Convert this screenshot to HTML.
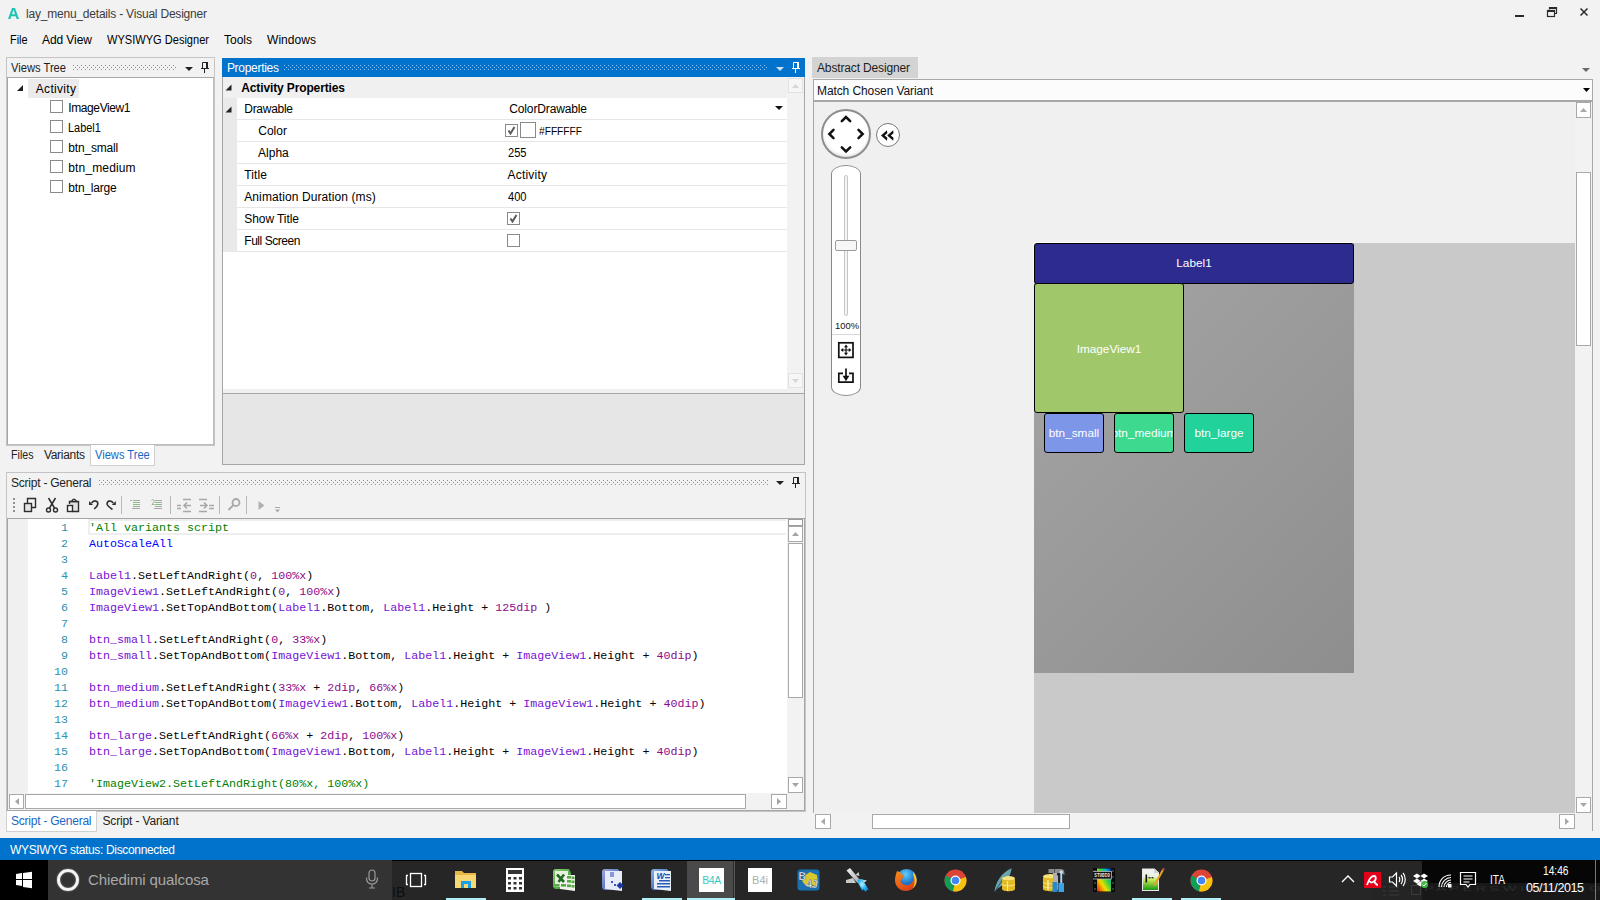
<!DOCTYPE html>
<html><head><meta charset="utf-8">
<style>
*{box-sizing:border-box;margin:0;padding:0}
html,body{width:1600px;height:900px;overflow:hidden;background:#f2f2f2;font-family:"Liberation Sans",sans-serif;font-size:12px;color:#000}
.a{position:absolute}
.t{position:absolute;white-space:nowrap;line-height:16px;font-size:11.5px}
.m{position:absolute;white-space:nowrap;line-height:16px;font-family:"Liberation Mono",monospace;font-size:11.68px}
.bx{position:absolute;border:1px solid #a0a0a0}
.grip{background-image:radial-gradient(circle at 1px 1px,#9a9a9a 0.8px,transparent 0.9px),radial-gradient(circle at 1px 1px,#9a9a9a 0.8px,transparent 0.9px);background-size:4px 4px,4px 4px;background-position:0 0,2px 2px}
.gripb{background-image:radial-gradient(circle at 1px 1px,#7fb3e6 0.8px,transparent 0.9px),radial-gradient(circle at 1px 1px,#7fb3e6 0.8px,transparent 0.9px);background-size:4px 4px,4px 4px;background-position:0 0,2px 2px}
.sb{position:absolute;background:#fff;border:1px solid #a8a8a8}
</style></head><body>

<!-- title bar -->
<div class="a" style="left:0;top:0;width:1600px;height:54px;background:#f2f2f2"></div>
<svg class="a" style="left:8px;top:8px" width="11" height="11"><path d="M0 11L4 0H7L11 11H8.6L7.7 8.3H3.3L2.4 11ZM4 6.3H7L5.5 1.8Z" fill="#1fc4b4"/></svg>
<div class="t" style="left:26.00px;top:6px;color:#3c3c3c;font-size:12px;letter-spacing:-0.208px">lay_menu_details - Visual Designer</div>
<!-- window controls -->
<svg class="a" style="left:1510px;top:4px" width="85" height="16"><g fill="none" stroke="#2a2a2a">
<path d="M5 12H14" stroke-width="2"/>
<path d="M39.5 5.5V3.5H46.5V9.5H44.5" stroke-width="1.2"/><path d="M39 4H47" stroke-width="2"/>
<rect x="37.5" y="6.5" width="7" height="6" stroke-width="1.2"/><path d="M37 7H45" stroke-width="2"/>
<path d="M70.5 4.5L77.5 11.5M77.5 4.5L70.5 11.5" stroke-width="1.5"/>
</g></svg>
<!-- menu -->
<div class="t" style="left:9.50px;top:32px;font-size:12px;transform:scaleX(0.9061);transform-origin:0 0">File</div>
<div class="t" style="left:42.00px;top:32px;font-size:12px;letter-spacing:-0.080px">Add View</div>
<div class="t" style="left:107.00px;top:32px;font-size:12px;transform:scaleX(0.9215);transform-origin:0 0">WYSIWYG Designer</div>
<div class="t" style="left:224.00px;top:32px;font-size:12px;letter-spacing:0.000px">Tools</div>
<div class="t" style="left:267.00px;top:32px;font-size:12px;letter-spacing:0.052px">Windows</div>

<!-- Views tree panel -->

<div class="a" style="left:6px;top:57px;width:209px;height:389px;border:1px solid #c4c4c4;background:#f2f2f2"></div>
<div class="t" style="left:11.00px;top:60px;color:#1e1e1e;font-size:12px;transform:scaleX(0.9302);transform-origin:0 0">Views Tree</div>
<svg class="a" style="left:73px;top:65px" width="104" height="6"><defs><pattern id="g7365" width="4" height="4" patternUnits="userSpaceOnUse"><rect x="0" y="0" width="1" height="1" fill="#8c8c8c"/><rect x="2" y="2" width="1" height="1" fill="#8c8c8c"/></pattern></defs><rect width="104" height="5" fill="url(#g7365)"/></svg>
<svg class="a" style="left:185px;top:67px" width="8" height="4"><path d="M0 0H8L4 4Z" fill="#222"/></svg>
<svg class="a" style="left:200px;top:61px" width="10" height="12"><path d="M2.5 1.5H7.5V7.5H2.5Z" fill="none" stroke="#222" stroke-width="1"/><path d="M6 1H8V8H6Z" fill="#222"/><path d="M1 7.5H9" stroke="#222" stroke-width="1"/><path d="M4.5 8V12" stroke="#222" stroke-width="1"/></svg>
<div class="a" style="left:7px;top:77px;width:207px;height:368px;background:#fff;border:1px solid #a6a6a6;border-right-color:#bdbdbd;border-bottom-color:#bdbdbd"></div>
<svg class="a" style="left:17px;top:85px" width="7" height="7"><path d="M6 0V6H0Z" fill="#222"/></svg>
<div class="a" style="left:28px;top:79px;width:51px;height:19px;background:#ebebeb"></div>
<div class="t" style="left:35.75px;top:81px;color:#000;font-size:12px;letter-spacing:0.321px">Activity</div>
<div class="a" style="left:50px;top:100px;width:13px;height:13px;border:1px solid #8a8a8a;background:#fff"></div>
<div class="t" style="left:68.30px;top:100px;color:#000;font-size:12px;letter-spacing:-0.401px">ImageView1</div>
<div class="a" style="left:50px;top:120px;width:13px;height:13px;border:1px solid #8a8a8a;background:#fff"></div>
<div class="t" style="left:68.30px;top:120px;color:#000;font-size:12px;transform:scaleX(0.9095);transform-origin:0 0">Label1</div>
<div class="a" style="left:50px;top:140px;width:13px;height:13px;border:1px solid #8a8a8a;background:#fff"></div>
<div class="t" style="left:68.30px;top:140px;color:#000;font-size:12px;letter-spacing:-0.172px">btn_small</div>
<div class="a" style="left:50px;top:160px;width:13px;height:13px;border:1px solid #8a8a8a;background:#fff"></div>
<div class="t" style="left:68.30px;top:160px;color:#000;font-size:12px;letter-spacing:0.137px">btn_medium</div>
<div class="a" style="left:50px;top:180px;width:13px;height:13px;border:1px solid #8a8a8a;background:#fff"></div>
<div class="t" style="left:68.30px;top:180px;color:#000;font-size:12px;letter-spacing:-0.208px">btn_large</div>

<div class="a" style="left:90px;top:445px;width:65px;height:21px;background:#fff;border:1px solid #d0d0d0;border-top:none"></div>
<div class="t" style="left:11.20px;top:447px;color:#222;font-size:12px;transform:scaleX(0.8889);transform-origin:0 0">Files</div>
<div class="t" style="left:43.90px;top:447px;color:#222;font-size:12px;letter-spacing:-0.289px">Variants</div>
<div class="t" style="left:95.20px;top:447px;color:#1a66c4;font-size:12px;transform:scaleX(0.9268);transform-origin:0 0">Views Tree</div>


<!-- Properties panel -->

<div class="a" style="left:222px;top:58px;width:583px;height:19px;background:#0173cc"></div>
<div class="t" style="left:226.90px;top:60px;color:#fff;font-size:12px;letter-spacing:-0.288px">Properties</div>
<svg class="a" style="left:284px;top:65px" width="484" height="6"><defs><pattern id="g28465" width="4" height="4" patternUnits="userSpaceOnUse"><rect x="0" y="0" width="1" height="1" fill="#8cc0ee"/><rect x="2" y="2" width="1" height="1" fill="#8cc0ee"/></pattern></defs><rect width="484" height="5" fill="url(#g28465)"/></svg>
<svg class="a" style="left:776px;top:67px" width="8" height="4"><path d="M0 0H8L4 4Z" fill="#cfe0f2"/></svg>
<svg class="a" style="left:791px;top:61px" width="10" height="12"><path d="M2.5 1.5H7.5V7.5H2.5Z" fill="none" stroke="#fff" stroke-width="1"/><path d="M6 1H8V8H6Z" fill="#fff"/><path d="M1 7.5H9" stroke="#fff" stroke-width="1"/><path d="M4.5 8V12" stroke="#fff" stroke-width="1"/></svg>
<div class="a" style="left:222px;top:77px;width:583px;height:313px;background:#fff;border-left:1px solid #a6a6a6;border-right:1px solid #a6a6a6;border-bottom:1px solid #a6a6a6"></div>
<div class="a" style="left:223px;top:77px;width:564px;height:21px;background:#f0f0f0"></div>
<div class="a" style="left:787px;top:77px;width:17px;height:312px;background:#f2f2f2"></div>
<div class="a" style="left:788px;top:78px;width:15px;height:15px;border:1px solid #e2e2e2;background:#f6f6f6"></div>
<svg class="a" style="left:792px;top:84px" width="7" height="4"><path d="M0 4H7L3.5 0Z" fill="#d6d6d6"/></svg>
<div class="a" style="left:788px;top:373px;width:15px;height:15px;border:1px solid #e2e2e2;background:#f6f6f6"></div>
<svg class="a" style="left:792px;top:379px" width="7" height="4"><path d="M0 0H7L3.5 4Z" fill="#d6d6d6"/></svg>
<div class="a" style="left:223px;top:98px;width:14px;height:154px;background:#e9e9e9"></div>
<svg class="a" style="left:225px;top:84px" width="7" height="7"><path d="M6.5 0.5V6.5H0.5Z" fill="#222"/></svg>
<div class="t" style="left:241.25px;top:80px;font-weight:bold;font-size:12px;letter-spacing:-0.128px">Activity Properties</div>
<svg class="a" style="left:225px;top:106px" width="7" height="7"><path d="M6.5 0.5V6.5H0.5Z" fill="#222"/></svg>
<div class="a" style="left:237px;top:119px;width:550px;height:1px;background:#e6e6e6"></div>
<div class="t" style="left:244.25px;top:101px;font-size:12px;letter-spacing:-0.277px">Drawable</div>
<div class="t" style="left:509.25px;top:101px;font-size:12px;letter-spacing:-0.135px">ColorDrawable</div>
<div class="a" style="left:237px;top:141px;width:550px;height:1px;background:#e6e6e6"></div>
<div class="t" style="left:258.25px;top:123px;font-size:12px;letter-spacing:0.016px">Color</div>
<div class="a" style="left:237px;top:163px;width:550px;height:1px;background:#e6e6e6"></div>
<div class="t" style="left:258.00px;top:145px;font-size:12px;letter-spacing:0.016px">Alpha</div>
<div class="t" style="left:507.50px;top:145px;font-size:12px;transform:scaleX(0.9250);transform-origin:0 0">255</div>
<div class="a" style="left:237px;top:185px;width:550px;height:1px;background:#e6e6e6"></div>
<div class="t" style="left:244.25px;top:167px;font-size:12px;letter-spacing:0.125px">Title</div>
<div class="t" style="left:507.50px;top:167px;font-size:12px;letter-spacing:0.214px">Activity</div>
<div class="a" style="left:237px;top:207px;width:550px;height:1px;background:#e6e6e6"></div>
<div class="t" style="left:244.25px;top:189px;font-size:12px;letter-spacing:0.097px">Animation Duration (ms)</div>
<div class="t" style="left:507.50px;top:189px;font-size:12px;transform:scaleX(0.9250);transform-origin:0 0">400</div>
<div class="a" style="left:237px;top:229px;width:550px;height:1px;background:#e6e6e6"></div>
<div class="t" style="left:244.25px;top:211px;font-size:12px;letter-spacing:-0.069px">Show Title</div>
<div class="a" style="left:237px;top:251px;width:550px;height:1px;background:#e6e6e6"></div>
<div class="t" style="left:244.25px;top:233px;font-size:12px;letter-spacing:-0.444px">Full Screen</div>

<svg class="a" style="left:775px;top:106px" width="8" height="4"><path d="M0 0H8L4 4Z" fill="#111"/></svg>
<div class="a" style="left:505px;top:124px;width:13px;height:13px;border:1px solid #8a8a8a;background:#fff"></div>
<svg class="a" style="left:507px;top:126px" width="9" height="9"><path d="M1.5 4.5L3.5 7.5L7.5 1" fill="none" stroke="#5a5a5a" stroke-width="2"/></svg>
<div class="a" style="left:520px;top:122px;width:16px;height:16px;border:1px solid #8a8a8a;background:#fff"></div>
<div class="t" style="left:539.00px;top:123px;font-size:11px;transform:scaleX(0.9260);transform-origin:0 0">#FFFFFF</div>
<div class="a" style="left:507px;top:212px;width:13px;height:13px;border:1px solid #8a8a8a;background:#fff"></div>
<svg class="a" style="left:509px;top:214px" width="9" height="9"><path d="M1.5 4.5L3.5 7.5L7.5 1" fill="none" stroke="#5a5a5a" stroke-width="2"/></svg>
<div class="a" style="left:507px;top:234px;width:13px;height:13px;border:1px solid #8a8a8a;background:#fff"></div>
<div class="a" style="left:222px;top:389px;width:583px;height:5px;background:#f0f0f0;border-left:1px solid #a6a6a6;border-right:1px solid #a6a6a6"></div>
<div class="a" style="left:222px;top:393px;width:583px;height:72px;background:#e6e6e6;border:1px solid #a6a6a6"></div>


<!-- Script panel -->

<div class="a" style="left:6px;top:472px;width:800px;height:340px;border:1px solid #c4c4c4;background:#f2f2f2"></div>
<div class="t" style="left:11.00px;top:475px;color:#1e1e1e;font-size:12px;letter-spacing:-0.233px">Script - General</div>
<svg class="a" style="left:99px;top:480px" width="669" height="6"><defs><pattern id="g99480" width="4" height="4" patternUnits="userSpaceOnUse"><rect x="0" y="0" width="1" height="1" fill="#8c8c8c"/><rect x="2" y="2" width="1" height="1" fill="#8c8c8c"/></pattern></defs><rect width="669" height="5" fill="url(#g99480)"/></svg>
<svg class="a" style="left:776px;top:481px" width="8" height="4"><path d="M0 0H8L4 4Z" fill="#222"/></svg>
<svg class="a" style="left:791px;top:476px" width="10" height="12"><path d="M2.5 1.5H7.5V7.5H2.5Z" fill="none" stroke="#222" stroke-width="1"/><path d="M6 1H8V8H6Z" fill="#222"/><path d="M1 7.5H9" stroke="#222" stroke-width="1"/><path d="M4.5 8V12" stroke="#222" stroke-width="1"/></svg>
<!-- toolbar -->
<svg class="a" style="left:10px;top:494px" width="280" height="24">
 <g fill="#8e8e8e"><rect x="3" y="4" width="2" height="2"/><rect x="3" y="8" width="2" height="2"/><rect x="3" y="12" width="2" height="2"/><rect x="3" y="16" width="2" height="2"/></g>
 <g fill="none" stroke="#2e2e2e" stroke-width="1.4">
  <path d="M17.5 9V4.5H25.5V13.5H21.5"/><rect x="14.5" y="9.5" width="7" height="8" fill="#e4e4e4"/>
  <path d="M38.5 4L44.5 14M45.5 4L39.5 14" stroke-width="1.5"/><circle cx="38.5" cy="16" r="2"/><circle cx="45.5" cy="16" r="2"/>
  <path d="M59.5 10V7.5H68.5V17.5H62.5" fill="#e2e2e2"/><path d="M61.5 7.5L62.5 6.2A1.6 1.6 0 0 1 65.5 6.2L66.5 7.5Z" fill="#fff"/><rect x="57.5" y="11.5" width="5" height="6" fill="#fafafa"/>
  <path d="M81.5 9.2C83.5 5.8 88.2 6.2 87.8 10.2C87.6 12 86 13.5 84.2 15" stroke-width="1.6"/>
  <path d="M103.2 9C101 5.8 96.2 6.6 97.3 10.8C98 12.5 100.5 14 102.5 15.5" stroke-width="1.6"/>
 </g>
 <path d="M79 7V11H83Z" fill="#2e2e2e"/><path d="M105.8 7V11H101.8Z" fill="#2e2e2e"/>
 <g stroke="#b8b8b8" stroke-width="1"><path d="M111.5 2V20M160.5 2V20M209.5 2V20M236.5 2V20"/></g>
 <g stroke-width="1.2">
  <path d="M120 6.5H122M123 6.5H130M123 12.5H130M122 14.5H130" stroke="#a8a8a8" stroke-width="1"/><path d="M123 8.5H130M123 10.5H130" stroke="#84c084" stroke-width="1"/>
  <path d="M145 6.5H152M145 12.5H152M144 14.5H152" stroke="#a8a8a8" stroke-width="1"/><path d="M145 8.5H152M145 10.5H152" stroke="#84c084" stroke-width="1"/><path d="M141.5 6.5C143 5 145 6 144 8L142 10.5H144.5" stroke="#a8a8a8" fill="none" stroke-width="1"/>
 </g>
 <g stroke="#a8a8a8" stroke-width="1.5" fill="none">
  <path d="M173 5.5H181M173 17.5H181M167 11.5H171M167 14.5H171M174 11.5H181M177 8.5L174 11.5L177 14.5"/>
  <path d="M189 5.5H197M189 17.5H197M199 11.5H204M199 14.5H204M190 11.5H197M194 8.5L197 11.5L194 14.5"/>
 </g>
 <g fill="none" stroke="#a8a8a8" stroke-width="1.8"><circle cx="226" cy="8.5" r="3.5"/><path d="M223.5 11L218.5 16"/></g>
 <path d="M248.5 7L254.5 11.5L248.5 16Z" fill="#b0b0b0"/>
 <path d="M265 13.5H270" stroke="#a8a8a8" stroke-width="1"/><path d="M265 15.5H270L267.5 18.5Z" fill="#a8a8a8"/>
</svg>
<!-- editor -->
<div class="a" style="left:7px;top:518px;width:798px;height:293px;background:#fff;border:1px solid #a6a6a6"></div>
<div class="a" style="left:8px;top:519px;width:20px;height:274px;background:#f0f0f0"></div>
<div class="a" style="left:88px;top:519px;width:698px;height:16px;border:2px solid #eeeeee;border-right:none"></div>
<div class="a" style="left:787px;top:519px;width:17px;height:274px;background:#f2f2f2"></div>
<div class="a" style="left:788px;top:519px;width:15px;height:7px;border:1px solid #9a9a9a;background:#fff"></div>
<div class="a sb" style="left:788px;top:526px;width:15px;height:16px"></div>
<svg class="a" style="left:792px;top:532px" width="7" height="4"><path d="M0 4H7L3.5 0Z" fill="#a4a4a4"/></svg>
<div class="a sb" style="left:788px;top:543px;width:15px;height:155px"></div>
<div class="a sb" style="left:788px;top:777px;width:15px;height:16px"></div>
<svg class="a" style="left:792px;top:783px" width="7" height="4"><path d="M0 0H7L3.5 4Z" fill="#a4a4a4"/></svg>
<div class="a" style="left:8px;top:793px;width:779px;height:17px;background:#f2f2f2"></div>
<div class="a sb" style="left:9px;top:794px;width:15px;height:15px"></div>
<svg class="a" style="left:15px;top:798px" width="4" height="7"><path d="M4 0V7L0 3.5Z" fill="#a4a4a4"/></svg>
<div class="a sb" style="left:25px;top:794px;width:721px;height:15px"></div>
<div class="a sb" style="left:771px;top:794px;width:16px;height:15px"></div>
<svg class="a" style="left:777px;top:798px" width="4" height="7"><path d="M0 0V7L4 3.5Z" fill="#a4a4a4"/></svg>
<div class="a" style="left:787px;top:793px;width:17px;height:17px;background:#f2f2f2"></div>
<div class="t" style="left:40px;width:28px;text-align:right;top:520px;color:#2b91af;font-family:'Liberation Mono',monospace;font-size:11.667px">1</div>
<div class="m" style="left:89px;top:520px"><span style="color:#008000">'All variants script</span></div>
<div class="t" style="left:40px;width:28px;text-align:right;top:536px;color:#2b91af;font-family:'Liberation Mono',monospace;font-size:11.667px">2</div>
<div class="m" style="left:89px;top:536px"><span style="color:#0000ff">AutoScaleAll</span></div>
<div class="t" style="left:40px;width:28px;text-align:right;top:552px;color:#2b91af;font-family:'Liberation Mono',monospace;font-size:11.667px">3</div>
<div class="t" style="left:40px;width:28px;text-align:right;top:568px;color:#2b91af;font-family:'Liberation Mono',monospace;font-size:11.667px">4</div>
<div class="m" style="left:89px;top:568px"><span style="color:#7412d2">Label1</span>.SetLeftAndRight(<span style="color:#8b0a8b">0</span>, <span style="color:#8b0a8b">100%x</span>)</div>
<div class="t" style="left:40px;width:28px;text-align:right;top:584px;color:#2b91af;font-family:'Liberation Mono',monospace;font-size:11.667px">5</div>
<div class="m" style="left:89px;top:584px"><span style="color:#7412d2">ImageView1</span>.SetLeftAndRight(<span style="color:#8b0a8b">0</span>, <span style="color:#8b0a8b">100%x</span>)</div>
<div class="t" style="left:40px;width:28px;text-align:right;top:600px;color:#2b91af;font-family:'Liberation Mono',monospace;font-size:11.667px">6</div>
<div class="m" style="left:89px;top:600px"><span style="color:#7412d2">ImageView1</span>.SetTopAndBottom(<span style="color:#7412d2">Label1</span>.Bottom, <span style="color:#7412d2">Label1</span>.Height + <span style="color:#8b0a8b">125dip</span> )</div>
<div class="t" style="left:40px;width:28px;text-align:right;top:616px;color:#2b91af;font-family:'Liberation Mono',monospace;font-size:11.667px">7</div>
<div class="t" style="left:40px;width:28px;text-align:right;top:632px;color:#2b91af;font-family:'Liberation Mono',monospace;font-size:11.667px">8</div>
<div class="m" style="left:89px;top:632px"><span style="color:#7412d2">btn_small</span>.SetLeftAndRight(<span style="color:#8b0a8b">0</span>, <span style="color:#8b0a8b">33%x</span>)</div>
<div class="t" style="left:40px;width:28px;text-align:right;top:648px;color:#2b91af;font-family:'Liberation Mono',monospace;font-size:11.667px">9</div>
<div class="m" style="left:89px;top:648px"><span style="color:#7412d2">btn_small</span>.SetTopAndBottom(<span style="color:#7412d2">ImageView1</span>.Bottom, <span style="color:#7412d2">Label1</span>.Height + <span style="color:#7412d2">ImageView1</span>.Height + <span style="color:#8b0a8b">40dip</span>)</div>
<div class="t" style="left:40px;width:28px;text-align:right;top:664px;color:#2b91af;font-family:'Liberation Mono',monospace;font-size:11.667px">10</div>
<div class="t" style="left:40px;width:28px;text-align:right;top:680px;color:#2b91af;font-family:'Liberation Mono',monospace;font-size:11.667px">11</div>
<div class="m" style="left:89px;top:680px"><span style="color:#7412d2">btn_medium</span>.SetLeftAndRight(<span style="color:#8b0a8b">33%x</span> + <span style="color:#8b0a8b">2dip</span>, <span style="color:#8b0a8b">66%x</span>)</div>
<div class="t" style="left:40px;width:28px;text-align:right;top:696px;color:#2b91af;font-family:'Liberation Mono',monospace;font-size:11.667px">12</div>
<div class="m" style="left:89px;top:696px"><span style="color:#7412d2">btn_medium</span>.SetTopAndBottom(<span style="color:#7412d2">ImageView1</span>.Bottom, <span style="color:#7412d2">Label1</span>.Height + <span style="color:#7412d2">ImageView1</span>.Height + <span style="color:#8b0a8b">40dip</span>)</div>
<div class="t" style="left:40px;width:28px;text-align:right;top:712px;color:#2b91af;font-family:'Liberation Mono',monospace;font-size:11.667px">13</div>
<div class="t" style="left:40px;width:28px;text-align:right;top:728px;color:#2b91af;font-family:'Liberation Mono',monospace;font-size:11.667px">14</div>
<div class="m" style="left:89px;top:728px"><span style="color:#7412d2">btn_large</span>.SetLeftAndRight(<span style="color:#8b0a8b">66%x</span> + <span style="color:#8b0a8b">2dip</span>, <span style="color:#8b0a8b">100%x</span>)</div>
<div class="t" style="left:40px;width:28px;text-align:right;top:744px;color:#2b91af;font-family:'Liberation Mono',monospace;font-size:11.667px">15</div>
<div class="m" style="left:89px;top:744px"><span style="color:#7412d2">btn_large</span>.SetTopAndBottom(<span style="color:#7412d2">ImageView1</span>.Bottom, <span style="color:#7412d2">Label1</span>.Height + <span style="color:#7412d2">ImageView1</span>.Height + <span style="color:#8b0a8b">40dip</span>)</div>
<div class="t" style="left:40px;width:28px;text-align:right;top:760px;color:#2b91af;font-family:'Liberation Mono',monospace;font-size:11.667px">16</div>
<div class="t" style="left:40px;width:28px;text-align:right;top:776px;color:#2b91af;font-family:'Liberation Mono',monospace;font-size:11.667px">17</div>
<div class="m" style="left:89px;top:776px"><span style="color:#008000">'ImageView2.SetLeftAndRight(80%x, 100%x)</span></div>

<div class="a" style="left:6px;top:811px;width:91px;height:21px;background:#fff;border:1px solid #d0d0d0;border-top:none"></div>
<div class="t" style="left:11.00px;top:813px;color:#1a66c4;font-size:12px;letter-spacing:-0.233px">Script - General</div>
<div class="t" style="left:102.50px;top:813px;color:#222;font-size:12px;letter-spacing:-0.150px">Script - Variant</div>


<!-- Abstract designer -->

<div class="a" style="left:812px;top:57px;width:106px;height:21px;background:#d3d3d3"></div>
<div class="t" style="left:817.00px;top:60px;color:#1e1e1e;font-size:12px;letter-spacing:-0.148px">Abstract Designer</div>
<svg class="a" style="left:1582px;top:68px" width="8" height="4"><path d="M0 0H8L4 4Z" fill="#6a6a6a"/></svg>
<div class="a" style="left:813px;top:79px;width:780px;height:752px;border:1px solid #a8a8a8;background:#f0f0f0"></div>
<div class="a" style="left:814px;top:80px;width:778px;height:22px;background:#fcfcfc;border-bottom:2px solid #a8a8a8"></div>
<div class="t" style="left:817.00px;top:83px;color:#10101a;font-size:12px;letter-spacing:-0.095px">Match Chosen Variant</div>
<svg class="a" style="left:1583px;top:88px" width="7" height="4"><path d="M0 0H7L3.5 4Z" fill="#000"/></svg>
<!-- nav circle -->
<div class="a" style="left:821px;top:109px;width:50px;height:50px;border-radius:50%;background:radial-gradient(circle at 50% 45%,#fff 0,#fff 66%,#e2e2e2 100%);border:2px solid #8e8e8e;box-shadow:inset 0 -2px 3px rgba(0,0,0,0.08)"></div>
<svg class="a" style="left:821px;top:109px" width="50" height="50"><g fill="none" stroke="#111" stroke-width="2.5" stroke-linecap="round" stroke-linejoin="miter"><path d="M20.8 12.2L25 8L29.2 12.2"/><path d="M20.8 38.3L25 42.5L29.2 38.3"/><path d="M12.5 20.8L8.3 25L12.5 29.2"/><path d="M37.5 20.8L41.7 25L37.5 29.2"/></g></svg>
<div class="a" style="left:876px;top:123px;width:24px;height:24px;border-radius:50%;background:#fff;border:1.3px solid #7a7a7a"></div>
<svg class="a" style="left:876px;top:123px" width="24" height="24"><g fill="#111"><path d="M5 12.5L11 7.2L11.3 10.2L8.6 12.5L11.3 14.8L11 17.8Z"/><path d="M11.2 12.5L17.2 7.2L17.5 10.2L14.8 12.5L17.5 14.8L17.2 17.8Z"/></g></svg>
<!-- slider -->
<div class="a" style="left:831px;top:165px;width:30px;height:231px;border:1px solid #8a8a8a;border-radius:15px 15px 15px 15px/9px 9px 9px 9px;background:#fff"></div>
<div class="a" style="left:844px;top:175px;width:4px;height:141px;border:1px solid #c6c6c6;border-radius:2px;background:#f4f4f4"></div>
<div class="a" style="left:835px;top:240px;width:22px;height:11px;border:1px solid #9a9a9a;border-radius:2px;background:#f7f7f7"></div>
<div class="t" style="left:835px;top:318px;font-size:9.4px;color:#111">100%</div>
<div class="a" style="left:832px;top:334px;width:28px;height:1px;background:#d8d8d8"></div>
<svg class="a" style="left:836px;top:340px" width="20" height="46"><g fill="none" stroke="#111"><rect x="2.8" y="2.8" width="14.2" height="14.6" stroke-width="1.7"/><path d="M10 6V14M6 10H14" stroke-width="1.2"/><path d="M7 33.3H2.8V42.2H17V33.3H13M10 28.5V38" stroke-width="1.7"/></g><g fill="#111"><path d="M10 4.6L8 7.2H12ZM10 15.4L8 12.8H12ZM4.6 10L7.2 8V12ZM15.4 10L12.8 8V12Z"/><path d="M6.6 35.8H13.4L10 41.2Z"/></g></svg>
<!-- canvas -->
<div class="a" style="left:1034px;top:243px;width:541px;height:570px;background:#c9c9c9"></div>
<div class="a" style="left:1034px;top:243px;width:320px;height:430px;background:linear-gradient(135deg,#a6a6a6,#8e8e8e)"></div>
<div class="a" style="left:1034px;top:243px;width:320px;height:41px;background:#2e2b8f;border:1px solid #000;border-radius:3px;box-shadow:-1px -1px 0 0 rgba(255,255,255,0.8)"></div>
<div class="t" style="left:1034px;top:255px;width:320px;text-align:center;color:#fff;font-size:11.8px">Label1</div>
<div class="a" style="left:1034px;top:283px;width:150px;height:130px;background:#a0c86b;border:1px solid #000;border-radius:3px"></div>
<div class="t" style="left:1034px;top:341px;width:150px;text-align:center;color:#fff;font-size:11.8px">ImageView1</div>
<div class="a" style="left:1044px;top:413px;width:60px;height:40px;background:#7e96e8;border:1px solid #000;border-radius:3px"></div>
<div class="t" style="left:1044px;top:425px;width:60px;text-align:center;color:#fff;font-size:11.8px">btn_small</div>
<div class="a" style="left:1114px;top:413px;width:60px;height:40px;background:#3cd98f;border:1px solid #000;border-radius:3px;overflow:hidden"><div class="t" style="left:-6px;top:11px;width:70px;text-align:center;color:#fff;font-size:11.8px">btn_medium</div></div>
<div class="a" style="left:1184px;top:413px;width:70px;height:40px;background:#22d29b;border:1px solid #000;border-radius:3px"></div>
<div class="t" style="left:1184px;top:425px;width:70px;text-align:center;color:#fff;font-size:11.8px">btn_large</div>
<!-- scrollbars -->
<div class="a" style="left:1575px;top:102px;width:17px;height:711px;background:#f2f2f2"></div>
<div class="sb" style="left:1576px;top:102px;width:15px;height:16px"></div>
<svg class="a" style="left:1580px;top:108px" width="7" height="4"><path d="M0 4H7L3.5 0Z" fill="#a8a8a8"/></svg>
<div class="sb" style="left:1576px;top:172px;width:15px;height:174px"></div>
<div class="sb" style="left:1576px;top:797px;width:15px;height:16px"></div>
<svg class="a" style="left:1580px;top:803px" width="7" height="4"><path d="M0 0H7L3.5 4Z" fill="#a8a8a8"/></svg>
<div class="a" style="left:813px;top:813px;width:779px;height:18px;background:#f2f2f2"></div>
<div class="sb" style="left:815px;top:814px;width:16px;height:15px"></div>
<svg class="a" style="left:821px;top:818px" width="4" height="7"><path d="M4 0V7L0 3.5Z" fill="#a8a8a8"/></svg>
<div class="sb" style="left:872px;top:814px;width:198px;height:15px"></div>
<div class="sb" style="left:1559px;top:814px;width:16px;height:15px"></div>
<svg class="a" style="left:1565px;top:818px" width="4" height="7"><path d="M0 0V7L4 3.5Z" fill="#a8a8a8"/></svg>


<!-- status bar -->
<div class="a" style="left:0;top:838px;width:1600px;height:22px;background:#0173cc"></div>
<div class="t" style="left:10.00px;top:842px;color:#fff;font-size:12px;letter-spacing:-0.336px">WYSIWYG status: Disconnected</div>

<!-- taskbar -->
<div class="a" style="left:0;top:860px;width:1600px;height:40px;background:#262626;border-top:1px solid #000"></div>
<div class="a" style="left:1422px;top:860px;width:178px;height:40px;background:#060606"></div>
<div class="a" style="left:1372px;top:883px;width:228px;height:17px;background:#181818"></div>
<div class="a" style="left:1372px;top:883px;width:50px;height:17px;background:#242424"></div>
<svg class="a" style="left:1378px;top:884px" width="44" height="16"><g fill="none" stroke="#3a3a3a" stroke-width="1"><path d="M5 3H8M5 7H8M5 11H8M11 3H21M11 7H21M11 11H21"/><rect x="33.5" y="1.5" width="9" height="9"/></g></svg>
<div class="t" style="left:1424px;top:881px;font-size:7px;letter-spacing:1.6px;color:#2c2c2c;transform:scaleX(2.1);transform-origin:0 0">PAPERSWIDTH.COM</div>
<div class="a" style="left:0;top:860px;width:48px;height:40px;background:#000"></div>
<svg class="a" style="left:16px;top:871px" width="17" height="18"><path d="M0 2.9L6 2.1V8H0ZM7 1.9L16 0.8V8H7ZM0 9H6V14.9L0 14.1ZM7 9H16V17.2L7 16Z" fill="#fff"/></svg>
<div class="a" style="left:48px;top:860px;width:344px;height:40px;background:#333333"></div>
<div class="a" style="left:57px;top:869px;width:22px;height:22px;border-radius:50%;border:3.4px solid #f4f4f4;box-shadow:0 0 1.5px #bbb, inset 0 0 1.5px #bbb"></div>
<div class="t" style="left:88.00px;top:872px;line-height:16px;color:#a9a9a9;font-size:15px;letter-spacing:-0.102px">Chiedimi qualcosa</div>
<svg class="a" style="left:364px;top:869px" width="16" height="21"><g fill="none" stroke="#9a9a9a" stroke-width="1.2"><rect x="5" y="1" width="6" height="11" rx="3"/><path d="M2.5 8.5C2.5 13 5 15 8 15C11 15 13.5 13 13.5 8.5M8 15V19M5 19H11"/></g></svg>
<div class="t" style="left:392px;top:884px;font-size:14px;color:#0e0e0e">IB</div>
<!-- task view -->
<svg class="a" style="left:405px;top:872px" width="22" height="16"><g fill="none" stroke="#fff" stroke-width="1.3"><rect x="5.5" y="1.5" width="11" height="13"/><path d="M3 3.5H1.5V12.5H3M19 3.5H20.5V12.5H19"/></g></svg>
<!-- explorer -->
<svg class="a" style="left:454px;top:869px" width="24" height="22"><path d="M1 2H8L10 4H22V19H1Z" fill="#e8b847"/><path d="M1 6H22V19H1Z" fill="#f7d774"/><path d="M7 12H17V19H14V15H10V19H7Z" fill="#1aa0e8"/></svg>
<div class="a" style="left:446px;top:898px;width:40px;height:2px;background:#aef0f5"></div>
<!-- calc -->
<svg class="a" style="left:505px;top:868px" width="20" height="25"><rect x="1" y="0" width="18" height="24" fill="#fff"/><rect x="3" y="2" width="14" height="4" fill="#333"/><g fill="#333"><rect x="3" y="9" width="3" height="2.5"/><rect x="8.5" y="9" width="3" height="2.5"/><rect x="14" y="9" width="3" height="2.5"/><rect x="3" y="14" width="3" height="2.5"/><rect x="8.5" y="14" width="3" height="2.5"/><rect x="14" y="14" width="3" height="2.5"/><rect x="3" y="19" width="3" height="2.5"/><rect x="8.5" y="19" width="3" height="2.5"/><rect x="14" y="19" width="3" height="2.5"/></g></svg>
<!-- excel -->
<svg class="a" style="left:551px;top:868px" width="26" height="24"><defs><linearGradient id="xl" x1="0" y1="0" x2="1" y2="1"><stop offset="0" stop-color="#8ad070"/><stop offset="1" stop-color="#2a8a2a"/></linearGradient></defs><path d="M2 4C2 2 3 1 5 1H18L20 5V20L18 21H4L2 19Z" fill="url(#xl)"/><path d="M4 3H17V19H4Z" fill="#e8f0e0"/><path d="M9 7H24V23L9 21Z" fill="#f0f4ea"/><g fill="#58a848"><rect x="16" y="8" width="4" height="2.6"/><rect x="20.5" y="8.5" width="3" height="2.6"/><rect x="16" y="12" width="4" height="2.6"/><rect x="20.5" y="12.5" width="3" height="2.6"/><rect x="4" y="16" width="4.5" height="2.6"/><rect x="10" y="16" width="5" height="2.6"/><rect x="16" y="16.5" width="4" height="2.6"/><rect x="20.5" y="17" width="3" height="2.6"/></g><path d="M6 6.5L13 14M13 6.5L7.5 14" stroke="#1e6e1e" stroke-width="2.6"/></svg>
<!-- visio -->
<svg class="a" style="left:600px;top:868px" width="25" height="24"><defs><linearGradient id="vs" x1="0" y1="0" x2="1" y2="1"><stop offset="0" stop-color="#9aaae0"/><stop offset="1" stop-color="#3048a8"/></linearGradient></defs><path d="M2 4C2 2 3 1 5 1H18L21 5V21L18 22H4L2 20Z" fill="url(#vs)"/><path d="M5 3H22V23L5 21Z" fill="#e8ecf8"/><g fill="#3a58c0"><rect x="10" y="4" width="4" height="5" fill="#8898d8"/><rect x="11" y="13" width="2" height="2"/><rect x="14" y="16" width="2" height="2"/><path d="M20 14L23.5 17.5L20 21L16.5 17.5Z" fill="#1a3aa8"/></g></svg>
<!-- word -->
<svg class="a" style="left:649px;top:868px" width="25" height="24"><defs><linearGradient id="wd" x1="0" y1="0" x2="1" y2="1"><stop offset="0" stop-color="#8cb0e8"/><stop offset="1" stop-color="#1c4aa8"/></linearGradient></defs><path d="M2 4C2 2 3 1 5 1H18L21 5V21L18 22H4L2 20Z" fill="url(#wd)"/><path d="M5 3H22V23L5 21Z" fill="#eaf0f8"/><g fill="#2a5ab8"><rect x="10" y="12" width="11" height="1.5"/><rect x="8" y="15" width="13" height="1.5"/><rect x="8" y="18" width="13" height="1.5"/></g><text x="7.5" y="11" font-family="Liberation Sans" font-weight="bold" font-style="italic" font-size="8.5" fill="#1a4ab0">W</text><rect x="16" y="6" width="5" height="1.3" fill="#2a5ab8"/><rect x="16" y="9" width="5" height="1.3" fill="#2a5ab8"/></svg>
<div class="a" style="left:642px;top:898px;width:40px;height:2px;background:#aef0f5"></div>
<!-- b4a active -->
<div class="a" style="left:687px;top:861px;width:46px;height:39px;background:#4a4a4a"></div>
<div class="a" style="left:733px;top:861px;width:1px;height:39px;background:#2e2e2e"></div><div class="a" style="left:734px;top:861px;width:1px;height:39px;background:#555"></div>
<div class="a" style="left:699px;top:868px;width:25px;height:24px;background:#fff"></div>
<div class="t" style="left:699px;top:872px;width:25px;text-align:center;font-size:10.5px;color:#3cc9c0;letter-spacing:-0.5px">B4A</div>
<div class="a" style="left:687px;top:898px;width:48px;height:2px;background:#aef0f5"></div>
<!-- b4i -->
<div class="a" style="left:748px;top:868px;width:24px;height:24px;background:#fff"></div>
<div class="t" style="left:748px;top:872px;width:24px;text-align:center;font-size:11px;color:#a8b0b0">B4i</div>
<!-- b4j -->
<svg class="a" style="left:797px;top:869px" width="24" height="22"><rect x="0.5" y="0.5" width="22" height="21" rx="3" fill="#1a70b0"/><path d="M7 7L13 3L20 6L21 14L16 19L9 17L5 12Z" fill="#d8c830"/><text x="1.5" y="10.5" font-family="Liberation Sans" font-weight="bold" font-size="10.5" fill="#fff" stroke="#1a4a80" stroke-width="0.4">B</text><text x="9.5" y="18.5" font-family="Liberation Sans" font-weight="bold" font-size="10" fill="#fff" stroke="#1a4a80" stroke-width="0.4">4J</text></svg>
<!-- plane -->
<svg class="a" style="left:845px;top:867px" width="26" height="26"><defs><linearGradient id="pl" x1="0" y1="0" x2="1" y2="1"><stop offset="0" stop-color="#f4f4f4"/><stop offset="1" stop-color="#a8a8a8"/></linearGradient><radialGradient id="fl" cx="0.4" cy="0.4" r="0.7"><stop offset="0" stop-color="#b8f0ff"/><stop offset="0.5" stop-color="#2cb8f0"/><stop offset="1" stop-color="#0a7ad8"/></radialGradient></defs>
<path d="M1 13L8 11L11 16L1 16Z" fill="#c8c8c8"/><path d="M14 12L22 13.5L20 15L13 15Z" fill="#d8d8d8"/><path d="M10.5 8L13.5 5L14.5 9Z" fill="#d0d0d0"/>
<path d="M1.5 3.5L5 1L15 13L12.5 16Z" fill="url(#pl)"/>
<path d="M12.5 15C12 12 16 11 18 13L24 23.5L22 22.5L21 25L18 22L17.5 24Z" fill="url(#fl)"/></svg>
<!-- firefox -->
<svg class="a" style="left:894px;top:868px" width="24" height="24"><defs><radialGradient id="ffb" cx="0.45" cy="0.25" r="0.8"><stop offset="0" stop-color="#5fd0f8"/><stop offset="0.6" stop-color="#1a6cc8"/><stop offset="1" stop-color="#0c2a78"/></radialGradient><linearGradient id="ffo" x1="0" y1="0" x2="0.6" y2="1"><stop offset="0" stop-color="#f0901a"/><stop offset="0.6" stop-color="#e8601a"/><stop offset="1" stop-color="#d8401a"/></linearGradient></defs>
<circle cx="12.5" cy="11.5" r="10.5" fill="url(#ffb)"/>
<path d="M3 3C2 6 1 9 1 12C1 18.5 6 23 12 23C17.5 23 22 19 22.5 13C22.5 9 21 6 19 4C21 8 20 13 17 15.5C14 18 10 17.5 7.5 15C6 13.5 6.5 11 8.5 10.5L10 9L9.5 7L8 6.5L6.5 4.5Z" fill="url(#ffo)"/>
<path d="M19 4C21.5 6.5 23 10 22.5 14C22 17 20.5 19 18.5 20.5C21 17 21.5 12 19.5 8Z" fill="#f8d020"/></svg>
<!-- chrome -->
<svg class="a" style="left:944px;top:869px" width="23" height="23"><circle cx="11.5" cy="11.5" r="11" fill="#db4437"/><path d="M11.5 11.5L1.9 6.4A11 11 0 0 0 9 22.3Z" fill="#0f9d58"/><path d="M11.5 11.5L9 22.3A11 11 0 0 0 22.5 11.5L22 8Z" fill="#f4c20d"/><circle cx="11.5" cy="11.5" r="5" fill="#fff"/><circle cx="11.5" cy="11.5" r="3.8" fill="#4285f4"/></svg>
<!-- sqlite feather -->
<svg class="a" style="left:993px;top:867px" width="24" height="26"><path d="M1.5 24.5C2.5 15 9 5 18.5 1.2C18 9 12.5 17 4.5 21.5Z" fill="#6aa4b0"/><path d="M1.5 25L12 9" stroke="#2a5868" stroke-width="1"/>
<ellipse cx="15.5" cy="11.5" rx="6.5" ry="2.6" fill="#f6e27a"/><path d="M9 11.5V22C9 25 22 25 22 22V11.5C22 14 9 14 9 11.5Z" fill="#e2ba22"/><path d="M9 17C9 19.5 22 19.5 22 17" stroke="#fae890" fill="none" stroke-width="1"/><path d="M14.5 14V24" stroke="#f8e890" stroke-width="1.2"/></svg>
<!-- db tool -->
<svg class="a" style="left:1042px;top:867px" width="24" height="26"><ellipse cx="8.5" cy="9.5" rx="7.5" ry="2.5" fill="#f6e27a"/><path d="M1 9.5V22C1 25 16 25 16 22V9.5C16 12 1 12 1 9.5Z" fill="#e2ba22"/><path d="M1 15C1 17.5 16 17.5 16 15M1 19C1 21.5 16 21.5 16 19" stroke="#fae890" fill="none" stroke-width="0.8"/><path d="M6 13V23" stroke="#fff6c0" stroke-width="1.2"/>
<path d="M6.5 2H12.5V6H6.5ZM13 2H19C21.5 2 22.5 4 22.5 6.5V8L19 6H13Z" fill="#8c8c8c"/><path d="M11 6H15V16H11Z" fill="#b0b0b0"/>
<path d="M10.5 15H15.5V25H10.5Z" fill="#2a88cc"/><path d="M16.5 16H22V25H16.5Z" fill="#3aa4e4"/><path d="M18.3 5H20.2V16H18.3Z" fill="#a8d8f8"/><ellipse cx="19.2" cy="5" rx="1.5" ry="1.5" fill="#c8e8ff"/></svg>
<!-- studio -->
<svg class="a" style="left:1093px;top:868px" width="22" height="24"><defs><linearGradient id="st" x1="0" y1="1" x2="1" y2="0"><stop offset="0" stop-color="#e81808"/><stop offset="0.35" stop-color="#f0e000"/><stop offset="0.6" stop-color="#38d040"/><stop offset="0.8" stop-color="#00b0d0"/><stop offset="1" stop-color="#0818c0"/></linearGradient></defs><rect x="0" y="0" width="22" height="24" fill="#0a0a0a"/><g fill="#3a3a3a"><rect x="1" y="2" width="2" height="2"/><rect x="1" y="8" width="2" height="2"/><rect x="1" y="14" width="2" height="2"/><rect x="1" y="20" width="2" height="2"/><rect x="19" y="2" width="2" height="2"/><rect x="19" y="8" width="2" height="2"/><rect x="19" y="14" width="2" height="2"/><rect x="19" y="20" width="2" height="2"/></g><rect x="4" y="0.5" width="14" height="23" fill="url(#st)"/><rect x="-0.5" y="3.5" width="19" height="7.5" fill="#111" stroke="#bbb" stroke-width="0.8"/><text x="1.3" y="9.4" font-family="Liberation Mono" font-weight="bold" font-size="5.6" fill="#f0f0f0" textLength="15.5" lengthAdjust="spacingAndGlyphs">STUDIO</text></svg>
<!-- notepad -->
<svg class="a" style="left:1141px;top:867px" width="24" height="25"><defs><linearGradient id="np" x1="0" y1="0" x2="0" y2="1"><stop offset="0" stop-color="#f4f6f0"/><stop offset="0.35" stop-color="#e8f0e0"/><stop offset="0.5" stop-color="#c8ec50"/><stop offset="1" stop-color="#189818"/></linearGradient></defs><path d="M1 1.5H13.5L18 5.5V24H1Z" fill="#e8e8e8"/><path d="M2 2.5H13L17 6V23H2Z" fill="url(#np)"/><path d="M13 1.5V6H18" fill="#d0d0d0"/><rect x="4.5" y="7.5" width="1.6" height="8" fill="#111"/><rect x="7.5" y="10" width="2" height="1.4" fill="#333"/><rect x="10.5" y="10" width="2" height="1.4" fill="#333"/><path d="M12.5 18L21 2.5L22.8 3.5L14.3 19Z" fill="#e8a020"/><path d="M21 2.5L22 0.8L23.8 1.8L22.8 3.5Z" fill="#d84040"/></svg>
<div class="a" style="left:1132px;top:898px;width:40px;height:2px;background:#aef0f5"></div>
<!-- chrome 2 -->
<svg class="a" style="left:1190px;top:869px" width="23" height="23"><circle cx="11.5" cy="11.5" r="11" fill="#db4437"/><path d="M11.5 11.5L1.9 6.4A11 11 0 0 0 9 22.3Z" fill="#0f9d58"/><path d="M11.5 11.5L9 22.3A11 11 0 0 0 22.5 11.5L22 8Z" fill="#f4c20d"/><circle cx="11.5" cy="11.5" r="5" fill="#fff"/><circle cx="11.5" cy="11.5" r="3.8" fill="#4285f4"/></svg>
<div class="a" style="left:1181px;top:898px;width:40px;height:2px;background:#aef0f5"></div>
<!-- tray -->
<svg class="a" style="left:1341px;top:874px" width="14" height="9"><path d="M1 8L7 2L13 8" fill="none" stroke="#fff" stroke-width="1.4"/></svg>
<svg class="a" style="left:1364px;top:872px" width="17" height="16"><rect width="17" height="16" fill="#e3001b"/><path d="M3 13C5 7 8 4 10 4C12 4 13 8 9 10C7 11 6 10 6 9M10 9C11 11 13 13 14 13" fill="none" stroke="#fff" stroke-width="1.8"/></svg>
<svg class="a" style="left:1388px;top:871px" width="18" height="17"><g fill="none" stroke="#fff" stroke-width="1.2"><path d="M1.5 6H4.5L8.5 2V15L4.5 11H1.5Z"/><path d="M11 6C12 7 12 10 11 11M13 4C15 6 15 11 13 13M15 2C18 5 18 12 15 15"/></g></svg>
<svg class="a" style="left:1412px;top:872px" width="17" height="16"><g fill="#fff"><path d="M1 4L5 1.5L8.5 4L5 6.5ZM8.5 4L12 1.5L16 4L12 6.5ZM1 9L5 6.5L8.5 9L5 11.5ZM8.5 9L12 6.5L16 9L12 11.5ZM4.5 12L8.5 9.5L12.5 12L8.5 14.5Z"/></g><circle cx="12.5" cy="12.5" r="3.5" fill="#3cb83c"/><path d="M10.5 12.5L12 14L14.5 11" stroke="#fff" stroke-width="1" fill="none"/></svg>
<svg class="a" style="left:1438px;top:874px" width="14" height="14"><g fill="none" stroke="#fff" stroke-width="1.1"><path d="M1 13C1 6 6 1 13 1M3.5 13C3.5 8 8 3.5 13 3.5M6 13C6 9.5 9.5 6 13 6M8.5 13C8.5 10.5 10.5 8.5 13 8.5"/></g><rect x="10" y="10" width="3.5" height="3.5" fill="#fff"/></svg>
<svg class="a" style="left:1459px;top:871px" width="18" height="19"><g fill="none" stroke="#fff" stroke-width="1.2"><path d="M1.5 1.5H16.5V13.5H11L9 16L7 13.5H1.5Z"/><path d="M4.5 5H13.5M4.5 8H13.5M4.5 11H10.5"/></g></svg>
<div class="t" style="left:1490.00px;top:872px;color:#fff;font-size:12.5px;transform:scaleX(0.8081);transform-origin:0 0">ITA</div>
<div class="t" style="left:1543.00px;top:863px;color:#fff;font-size:12.5px;transform:scaleX(0.8144);transform-origin:0 0">14:46</div>
<div class="t" style="left:1526.00px;top:880px;color:#fff;font-size:12.5px;letter-spacing:-0.403px">05/11/2015</div>
<div class="a" style="left:1595px;top:860px;width:1px;height:40px;background:#777"></div>
</body></html>
